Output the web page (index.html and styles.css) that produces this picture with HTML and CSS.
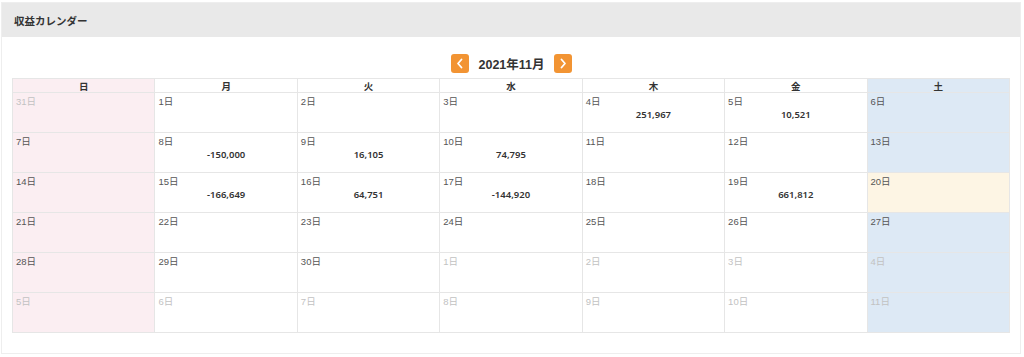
FILE: index.html
```html
<!DOCTYPE html>
<html lang="ja">
<head>
<meta charset="utf-8">
<title>収益カレンダー</title>
<link rel="stylesheet" href="styles.css">
</head>
<body>
<div class="card">
  <div class="card-head">収益カレンダー</div>
  <div class="card-body">
    <div class="nav">
      <button class="nav-btn" aria-label="前月"><svg viewBox="0 0 18 19" width="18" height="19"><path d="M10.5 5.5 L7 9.5 L10.5 13.5" fill="none" stroke="#fff" stroke-width="1.8" stroke-linecap="round" stroke-linejoin="round"/></svg></button>
      <span class="nav-title">2021年11月</span>
      <button class="nav-btn" aria-label="翌月"><svg viewBox="0 0 18 19" width="18" height="19"><path d="M7.5 5.5 L11 9.5 L7.5 13.5" fill="none" stroke="#fff" stroke-width="1.8" stroke-linecap="round" stroke-linejoin="round"/></svg></button>
    </div>
    <table class="cal">
      <thead>
        <tr><th class="sun">日</th><th>月</th><th>火</th><th>水</th><th>木</th><th>金</th><th class="sat">土</th></tr>
      </thead>
      <tbody>
        <tr>
          <td class="sun other"><span class="d">31日</span></td>
          <td><span class="d">1日</span></td>
          <td><span class="d">2日</span></td>
          <td><span class="d">3日</span></td>
          <td><span class="d">4日</span><span class="amt">251,967</span></td>
          <td><span class="d">5日</span><span class="amt">10,521</span></td>
          <td class="sat"><span class="d">6日</span></td>
        </tr>
        <tr>
          <td class="sun"><span class="d">7日</span></td>
          <td><span class="d">8日</span><span class="amt">-150,000</span></td>
          <td><span class="d">9日</span><span class="amt">16,105</span></td>
          <td><span class="d">10日</span><span class="amt">74,795</span></td>
          <td><span class="d">11日</span></td>
          <td><span class="d">12日</span></td>
          <td class="sat"><span class="d">13日</span></td>
        </tr>
        <tr>
          <td class="sun"><span class="d">14日</span></td>
          <td><span class="d">15日</span><span class="amt">-166,649</span></td>
          <td><span class="d">16日</span><span class="amt">64,751</span></td>
          <td><span class="d">17日</span><span class="amt">-144,920</span></td>
          <td><span class="d">18日</span></td>
          <td><span class="d">19日</span><span class="amt">661,812</span></td>
          <td class="today"><span class="d">20日</span></td>
        </tr>
        <tr>
          <td class="sun"><span class="d">21日</span></td>
          <td><span class="d">22日</span></td>
          <td><span class="d">23日</span></td>
          <td><span class="d">24日</span></td>
          <td><span class="d">25日</span></td>
          <td><span class="d">26日</span></td>
          <td class="sat"><span class="d">27日</span></td>
        </tr>
        <tr>
          <td class="sun"><span class="d">28日</span></td>
          <td><span class="d">29日</span></td>
          <td><span class="d">30日</span></td>
          <td class="other"><span class="d">1日</span></td>
          <td class="other"><span class="d">2日</span></td>
          <td class="other"><span class="d">3日</span></td>
          <td class="sat other"><span class="d">4日</span></td>
        </tr>
        <tr>
          <td class="sun other"><span class="d">5日</span></td>
          <td class="other"><span class="d">6日</span></td>
          <td class="other"><span class="d">7日</span></td>
          <td class="other"><span class="d">8日</span></td>
          <td class="other"><span class="d">9日</span></td>
          <td class="other"><span class="d">10日</span></td>
          <td class="sat other"><span class="d">11日</span></td>
        </tr>
      </tbody>
    </table>
  </div>
</div>
</body>
</html>
```
FILE: styles.css
```css
* { box-sizing: border-box; }
html, body { margin: 0; padding: 0; background: #fff; }
body {
  font-family: "Liberation Sans", "Noto Sans CJK JP", sans-serif;
  color: #333;
  padding: 2px 3px 0 1px;
}
.card {
  border: 1px solid #eeeeee;
  height: 352px;
  background: #fff;
}
.card-head {
  background: #e9e9e9;
  height: 34px;
  padding: 0 12px;
  display: flex;
  align-items: center;
  font-size: 10.5px;
  font-weight: bold;
  color: #333;
  font-family: "Noto Sans CJK JP", sans-serif;
}
.card-body {
  padding: 17px 9px 0 10px;
}
.nav {
  display: flex;
  justify-content: center;
  align-items: center;
  gap: 8px;
  height: 19px;
  margin-bottom: 5px;
}
.nav-btn {
  width: 18px;
  height: 19px;
  padding: 0;
  border: none;
  border-radius: 3px;
  background: #f29433;
  display: flex;
  align-items: center;
  justify-content: center;
}
.nav-title {
  font-size: 12.5px;
  font-weight: bold;
  color: #333;
  padding: 0 1px;
}
.cal {
  width: 998px;
  border-collapse: collapse;
  table-layout: fixed;
}
.cal th, .cal td {
  border: 1px solid #e6e6e6;
}
.cal th {
  height: 14px;
  padding: 0;
  font-size: 9.5px;
  font-weight: bold;
  color: #333;
  text-align: center;
  line-height: 12px;
  font-family: "Noto Sans CJK JP", sans-serif;
}
.cal td {
  height: 40px;
  vertical-align: top;
  padding: 2px 3px 0;
}
.d {
  display: block;
  font-size: 9.5px;
  line-height: 13px;
  color: #555;
}
.amt {
  display: block;
  text-align: center;
  font-family: "Noto Sans", "Liberation Sans", sans-serif;
  font-size: 9.5px;
  font-weight: 600;
  color: #333;
  line-height: 12px;
  margin-top: 1px;
}
.sun { background: #fbeef2; }
.sat { background: #dde9f5; }
.today { background: #fdf5e4; }
.other .d { color: #c2c2c2; }
```
